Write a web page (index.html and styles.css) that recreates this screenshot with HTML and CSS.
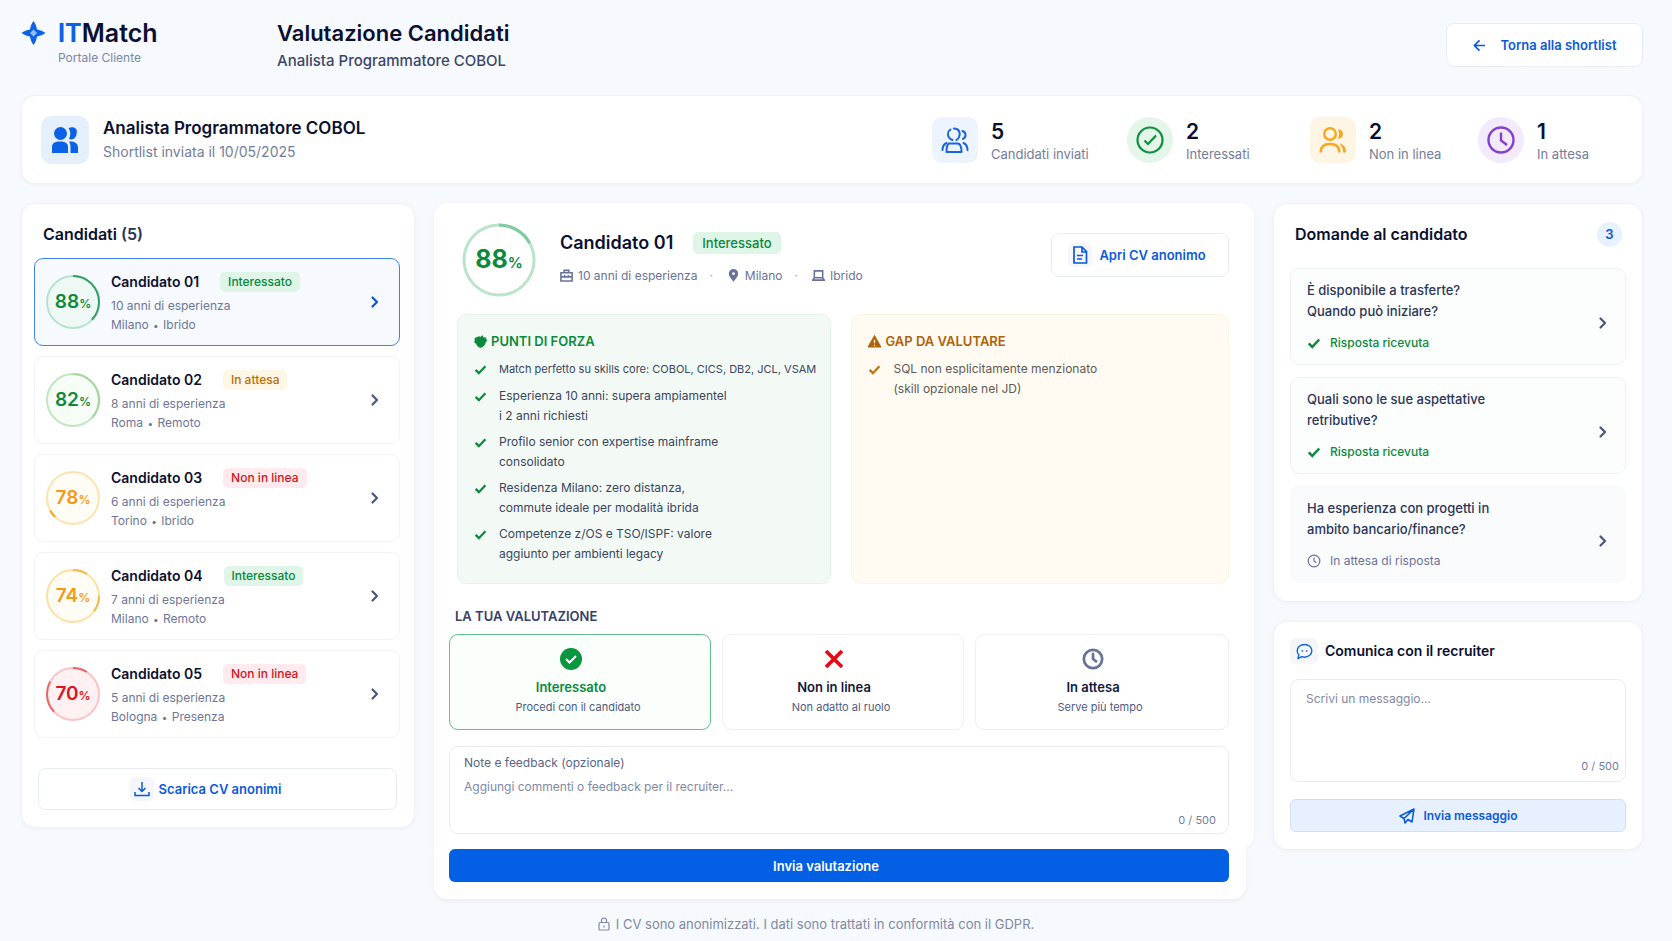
FILE: index.html
```html
<!DOCTYPE html>
<html lang="it">
<head>
  <meta charset="utf-8">
  <meta name="viewport" content="width=device-width, initial-scale=1">
  <title>ITMatch - Valutazione Candidati</title>
  <link rel="stylesheet" href="styles.css">
</head>
<body>

  <!-- shared icons -->
  <svg class="sprite" aria-hidden="true">
    <symbol id="i-chevron" viewBox="0 0 16 16"><path d="M5.5 3.5L10 8l-4.500 4.500" fill="none" stroke="currentColor" stroke-width="2.2" stroke-linecap="round" stroke-linejoin="round"/></symbol>
    <symbol id="i-check" viewBox="0 0 16 16"><path d="M2 8.5l4 4L14 4" fill="none" stroke="currentColor" stroke-width="2.8"/></symbol>
    <symbol id="i-clock" viewBox="0 0 24 24"><g fill="none" stroke="currentColor" stroke-linecap="round" stroke-linejoin="round"><circle cx="12" cy="12" r="10"/><path d="M12 6.5V12l3.5 2.5"/></g></symbol>
  </svg>

  <header class="topbar">
    <div class="brand">
      <svg class="brand-mark" viewBox="0 0 24 24"><path d="M12 0c2 2.500 3 5.500 3.500 8.500C18.500 9 21.500 10 24 12c-2.500 2-5.500 3-8.500 3.500C15 18.500 14 21.500 12 24c-2-2.500-3-5.500-3.500-8.500C5.500 15 2.500 14 0 12c2.500-2 5.500-3 8.500-3.500C9 5.500 10 2.500 12 0z" fill="#0b62e6"/><path d="M12 8.500l3.500 3.500-3.500 3.500L8.500 12z" fill="#8fbcfb"/></svg>
      <div>
        <div class="brand-name"><span>IT</span>Match</div>
        <div class="brand-sub">Portale Cliente</div>
      </div>
    </div>
    <div class="page-title">
      <h1>Valutazione Candidati</h1>
      <p>Analista Programmatore COBOL</p>
    </div>
    <a href="#" class="btn btn-back">
      <svg viewBox="0 0 16 16"><path d="M14 8H3M8 2.500L2.500 8 8 13.500" fill="none" stroke="currentColor" stroke-width="1.800"/></svg>
      Torna alla shortlist
    </a>
  </header>

  <section class="card summary">
    <div class="tile tile-solid">
      <svg viewBox="0 0 28 28" fill="#0b62e6"><circle cx="9.500" cy="7.500" r="6.500"/><path d="M17.500 2c6-2.500 9.500 1 8 5.500 0 4-3.500 7-7.500 5.500 1.800-4 1.800-7.500-.5-11z"/><path d="M1 27v-6c0-4 3-5.500 8-5.500s8 1.500 8 5.500v6zM18 15.500c6-.5 9 2 9 6V27h-7.500v-5c0-3-.5-5-1.500-6.500z"/></svg>
    </div>
    <div class="summary-text">
      <h2>Analista Programmatore COBOL</h2>
      <p>Shortlist inviata il 10/05/2025</p>
    </div>
    <div class="stats">
      <div class="stat">
        <div class="tile tile-blue">
          <svg viewBox="0 0 28 28" fill="none" stroke="currentColor" stroke-width="2" stroke-linecap="round" stroke-linejoin="round"><path d="M9.500 3.500C6.500 5.500 6.500 9 8 11.500c1 1.500 2 2 3.500 2.500M13 2.500c5 0 7 4.500 5 8.500-.5 1.500-1.500 2.500-2.500 3M21.500 5c4 1.500 4 6 .5 8"/><path d="M8 17.500h8.500c3 0 4 2.500 4 8.500h-15c0-5.500.5-7.500 2.500-8.500z"/><path d="M5.500 17C3 18 1.500 20.500 1.500 24M22.500 17c2.500 1 4 3.500 4 7"/></svg>
        </div>
        <div><strong>5</strong><span>Candidati inviati</span></div>
      </div>
      <div class="stat">
        <div class="tile tile-green">
          <svg viewBox="0 0 28 28" fill="none" stroke="currentColor" stroke-width="2.200"><circle cx="14" cy="14" r="12.500"/><path d="M8.500 14.500l3.500 3.500 8-8.500"/></svg>
        </div>
        <div><strong>2</strong><span>Interessati</span></div>
      </div>
      <div class="stat">
        <div class="tile tile-orange">
          <svg viewBox="0 0 28 28" fill="none" stroke="currentColor" stroke-width="2.400"><circle cx="11" cy="8" r="5.800"/><path d="M1.500 26.500c0-6 3.500-8.500 9.500-8.500s9.500 2.500 9.500 8.500"/><path d="M19 3.500c2.500-.5 5 1.500 5 4.500s-2.500 5-5 4.500c1.500-3 1.500-6 0-9zM20.500 17.500c4 .5 6.500 4 6.500 9h-3c0-4-1-6.500-3.500-9z" fill="currentColor" stroke="none"/></svg>
        </div>
        <div><strong>2</strong><span>Non in linea</span></div>
      </div>
      <div class="stat">
        <div class="tile tile-purple">
          <svg viewBox="0 0 28 28" fill="none" stroke="currentColor" stroke-width="2.400"><circle cx="14" cy="14" r="12.500"/><path d="M14 6.500v8l6 4.500"/></svg>
        </div>
        <div><strong>1</strong><span>In attesa</span></div>
      </div>
    </div>
  </section>

  <main class="columns">

    <aside class="card candidates">
      <h2>Candidati <span>(5)</span></h2>
      <ul class="candidate-list">
        <li>
          <a href="#" class="candidate active">
            <div class="ring ring-green">
              <svg viewBox="0 0 54 54"><circle class="track" cx="27" cy="27" r="26"/><circle class="arc" cx="27" cy="27" r="26" pathLength="100" stroke-dasharray="37 100"/></svg>
              <b>88<small>%</small></b>
            </div>
            <div class="candidate-info">
              <h3>Candidato 01 <span class="badge badge-green">Interessato</span></h3>
              <p>10 anni di esperienza</p>
              <p>Milano <i>•</i> Ibrido</p>
            </div>
            <svg class="chevron"><use href="#i-chevron"/></svg>
          </a>
        </li>
        <li>
          <a href="#" class="candidate">
            <div class="ring ring-lime">
              <svg viewBox="0 0 54 54"><circle class="track" cx="27" cy="27" r="26"/><circle class="arc" cx="27" cy="27" r="26" pathLength="100" stroke-dasharray="37 100"/></svg>
              <b>82<small>%</small></b>
            </div>
            <div class="candidate-info">
              <h3>Candidato 02 <span class="badge badge-yellow">In attesa</span></h3>
              <p>8 anni di esperienza</p>
              <p>Roma <i>•</i> Remoto</p>
            </div>
            <svg class="chevron"><use href="#i-chevron"/></svg>
          </a>
        </li>
        <li>
          <a href="#" class="candidate">
            <div class="ring ring-orange">
              <svg viewBox="0 0 54 54"><circle class="track" cx="27" cy="27" r="26"/><circle class="arc" cx="27" cy="27" r="26" pathLength="100" stroke-dasharray="0 62 5 100"/></svg>
              <b>78<small>%</small></b>
            </div>
            <div class="candidate-info">
              <h3>Candidato 03 <span class="badge badge-red">Non in linea</span></h3>
              <p>6 anni di esperienza</p>
              <p>Torino <i>•</i> Ibrido</p>
            </div>
            <svg class="chevron"><use href="#i-chevron"/></svg>
          </a>
        </li>
        <li>
          <a href="#" class="candidate">
            <div class="ring ring-amber">
              <svg viewBox="0 0 54 54"><circle class="track" cx="27" cy="27" r="26"/><circle class="arc" cx="27" cy="27" r="26" pathLength="100" stroke-dasharray="9 16 10 100"/></svg>
              <b>74<small>%</small></b>
            </div>
            <div class="candidate-info">
              <h3>Candidato 04 <span class="badge badge-green">Interessato</span></h3>
              <p>7 anni di esperienza</p>
              <p>Milano <i>•</i> Remoto</p>
            </div>
            <svg class="chevron"><use href="#i-chevron"/></svg>
          </a>
        </li>
        <li>
          <a href="#" class="candidate">
            <div class="ring ring-red">
              <svg viewBox="0 0 54 54"><circle class="track" cx="27" cy="27" r="26"/><circle class="arc" cx="27" cy="27" r="26" pathLength="100" stroke-dasharray="9 54 20 100"/></svg>
              <b>70<small>%</small></b>
            </div>
            <div class="candidate-info">
              <h3>Candidato 05 <span class="badge badge-red">Non in linea</span></h3>
              <p>5 anni di esperienza</p>
              <p>Bologna <i>•</i> Presenza</p>
            </div>
            <svg class="chevron"><use href="#i-chevron"/></svg>
          </a>
        </li>
      </ul>
      <button type="button" class="btn btn-download">
        <span class="btn-icon"><svg viewBox="0 0 16 16" fill="none" stroke="currentColor" stroke-width="1.500"><path d="M8 1v9M4.500 7L8 10.500 11.500 7M1 11v3.500h14V11"/></svg></span>
        Scarica CV anonimi
      </button>
    </aside>

    <section class="detail">
      <div class="detail-main">
        <div class="detail-head">
          <div class="ring ring-big">
            <svg viewBox="0 0 74 74"><circle class="track" cx="37" cy="37" r="35"/><circle class="arc" cx="37" cy="37" r="35" pathLength="100" stroke-dasharray="17 100"/></svg>
            <b>88<small>%</small></b>
          </div>
          <div class="detail-info">
            <h2>Candidato 01 <span class="badge badge-green">Interessato</span></h2>
            <ul class="meta">
              <li><svg viewBox="0 0 14 14" fill="none" stroke="currentColor" stroke-width="1.700"><path d="M1 4h12v9H1zM4.500 4V1.500h5V4M1 8.500h12M5 6.500v3M9 6.500v3"/></svg>10 anni di esperienza</li>
              <li><svg viewBox="0 0 14 14"><path d="M7 0a5 5 0 0 0-5 5c0 3.500 3.500 6 5 9 1.500-3 5-5.500 5-9a5 5 0 0 0-5-5z" fill="currentColor"/><circle cx="7" cy="5" r="1.500" fill="#fff"/></svg>Milano</li>
              <li><svg viewBox="0 0 14 14" fill="none" stroke="currentColor" stroke-width="1.700"><path d="M2.500 2h9v7.500h-9zM0 12h14M2.500 9.500L1 12M11.500 9.500L13 12"/></svg>Ibrido</li>
            </ul>
          </div>
          <a href="#" class="btn btn-cv">
            <span class="btn-icon"><svg viewBox="0 0 16 18" fill="none" stroke="currentColor" stroke-width="1.700"><path d="M2 1h8l4.500 4.500V17H2zM10 1v5h4.500M5 9.500h6M5 13h5"/></svg></span>
            Apri CV anonimo
          </a>
        </div>

        <div class="boxes">
          <div class="box box-green">
            <h3><svg viewBox="0 0 14 14" fill="currentColor"><path d="M7 14C3.500 12.500 2.500 11 2.500 9.500.5 9 0 7 .8 5.500 0 3.500 1.500 2 3.500 2.500 4 1 6 .8 7 2.500c.5-1.500 2-2.500 3-1.500L9.500 3c1.500-1 3.500-.5 3.500 1 1.500 1 1 3-.5 4 0 3-2.500 4.500-5.500 6z"/></svg>PUNTI DI FORZA</h3>
            <ul>
              <li class="compact"><svg><use href="#i-check"/></svg><span>Match perfetto su skills core: COBOL, CICS, DB2, JCL, VSAM</span></li>
              <li><svg><use href="#i-check"/></svg><span>Esperienza 10 anni: supera ampiamentel<br>i 2 anni richiesti</span></li>
              <li><svg><use href="#i-check"/></svg><span>Profilo senior con expertise mainframe<br>consolidato</span></li>
              <li><svg><use href="#i-check"/></svg><span>Residenza Milano: zero distanza,<br>commute ideale per modalità ibrida</span></li>
              <li><svg><use href="#i-check"/></svg><span>Competenze z/OS e TSO/ISPF: valore<br>aggiunto per ambienti legacy</span></li>
            </ul>
          </div>
          <div class="box box-yellow">
            <h3><svg viewBox="0 0 14 14"><path d="M7 .5L14 13H0z" fill="currentColor" stroke="currentColor" stroke-linejoin="round"/><path d="M7 5v4M7 10.500V12" stroke="#fff3d6" stroke-width="1.400"/></svg>GAP DA VALUTARE</h3>
            <ul>
              <li><svg><use href="#i-check"/></svg><span>SQL non esplicitamente menzionato<br>(skill opzionale nel JD)</span></li>
            </ul>
          </div>
        </div>

        <h3 class="section-label">LA TUA VALUTAZIONE</h3>
        <div class="options">
          <button type="button" class="option selected">
            <span class="option-title">
              <svg viewBox="0 0 22 22"><circle cx="11" cy="11" r="11" fill="#08963f"/><path d="M6 11l3.500 3.500 6.500-6.500" fill="none" stroke="#fff" stroke-width="2"/></svg>
              Interessato
            </span>
            <small>Procedi con il candidato</small>
          </button>
          <button type="button" class="option">
            <span class="option-title">
              <svg viewBox="0 0 22 22"><path d="M3 3l16 16M19 3L3 19" stroke="#e60914" stroke-width="3.800"/></svg>
              Non in linea
            </span>
            <small>Non adatto al ruolo</small>
          </button>
          <button type="button" class="option">
            <span class="option-title">
              <svg class="icon-wait"><use href="#i-clock"/></svg>
              In attesa
            </span>
            <small>Serve più tempo</small>
          </button>
        </div>

        <div class="notes">
          <label for="notes">Note e feedback (opzionale)</label>
          <textarea id="notes" maxlength="500" placeholder="Aggiungi commenti o feedback per il recruiter..."></textarea>
          <span class="counter">0 / 500</span>
        </div>
      </div>
      <div class="detail-foot">
        <button type="submit" class="btn-primary">Invia valutazione</button>
      </div>
    </section>

    <div class="side">
      <section class="card questions">
        <div class="questions-head">
          <h2>Domande al candidato</h2>
          <span class="count">3</span>
        </div>
        <a href="#" class="question">
          <div>
            <p>È disponibile a trasferte?<br>Quando può iniziare?</p>
            <span class="status status-ok"><svg><use href="#i-check"/></svg>Risposta ricevuta</span>
          </div>
          <svg class="chevron"><use href="#i-chevron"/></svg>
        </a>
        <a href="#" class="question">
          <div>
            <p>Quali sono le sue aspettative<br>retributive?</p>
            <span class="status status-ok"><svg><use href="#i-check"/></svg>Risposta ricevuta</span>
          </div>
          <svg class="chevron"><use href="#i-chevron"/></svg>
        </a>
        <a href="#" class="question pending">
          <div>
            <p>Ha esperienza con progetti in<br>ambito bancario/finance?</p>
            <span class="status"><svg class="icon-wait"><use href="#i-clock"/></svg>In attesa di risposta</span>
          </div>
          <svg class="chevron"><use href="#i-chevron"/></svg>
        </a>
      </section>

      <section class="card recruiter">
        <h2>
          <span class="btn-icon"><svg viewBox="0 0 18 18" fill="none" stroke="currentColor" stroke-width="1.500" stroke-linejoin="round"><path d="M2 16.500l1-3.700C.5 10 .8 6 3.500 3.500c3-2.500 8-2.500 11 0s3 7 0 9.500c-2.500 2-6 2.300-8.500 1.500z"/><path d="M6 8.500h1.500M10.500 8.500H12"/></svg></span>
          <label for="message">Comunica con il recruiter</label>
        </h2>
        <div class="message">
          <textarea id="message" maxlength="500" placeholder="Scrivi un messaggio..."></textarea>
          <span class="counter">0 / 500</span>
        </div>
        <button type="button" class="btn btn-send">
          <svg viewBox="0 0 16 16" fill="none" stroke="currentColor" stroke-width="1.600" stroke-linejoin="round"><path d="M15 1L1 8l4 2.500L15 1l-2 13-4-2.500L6 15l-1-4.500"/></svg>
          Invia messaggio
        </button>
      </section>
    </div>
  </main>

  <footer class="privacy">
    <svg viewBox="0 0 12 14" fill="none" stroke="currentColor" stroke-width="1.200"><rect x="1" y="5.500" width="10" height="7.500" rx="1"/><path d="M3.500 5.500V3.500a2.500 2.500 0 0 1 5 0v2M6 8.500v2"/></svg>
    I CV sono anonimizzati. I dati sono trattati in conformità con il GDPR.
  </footer>

</body>
</html>
```
FILE: styles.css
```css
* {
  box-sizing: border-box;
}

body {
  margin: 0;
  padding: 0 29px 0 21px;
  background: #f6f9fd;
  color: #0b1030;
  font-family: Inter, "Liberation Sans", sans-serif;
  font-size: 13px;
  line-height: 20px;
}

h1, h2, h3, p, ul {
  margin: 0;
  padding: 0;
}

ul {
  list-style: none;
}

a {
  color: inherit;
  text-decoration: none;
}

button, textarea {
  font-family: inherit;
  font-size: 13px;
}

button {
  cursor: pointer;
}

svg {
  display: block;
  flex: none;
}

.sprite {
  display: none;
}

.card {
  background: #fff;
  border: 1px solid #eff3f8;
  border-radius: 14px;
  box-shadow: 0 1px 4px rgba(30, 60, 110, 0.04);
}

/* Header */
.topbar {
  display: flex;
  align-items: flex-start;
  height: 95px;
  padding-top: 17px;
}

.brand {
  display: flex;
  gap: 12px;
  width: 256px;
}

.brand-mark {
  width: 25px;
  height: 24px;
  margin-top: 4px;
}

.brand-name {
  font-size: 25px;
  font-weight: 600;
  line-height: 32px;
}

.brand-name span {
  color: #0b62e6;
  font-weight: 700;
}

.brand-sub {
  color: #7d86a8;
  font-size: 12px;
  line-height: 18px;
}

.page-title h1 {
  font-size: 22px;
  font-weight: 600;
  line-height: 32px;
}

.page-title p {
  color: #3c4668;
  font-size: 15px;
  font-weight: 500;
  line-height: 24px;
}

.btn {
  display: flex;
  align-items: center;
  justify-content: center;
  background: #fff;
  border: 1px solid #e8edf4;
  border-radius: 8px;
  color: #0b5ad9;
  font-weight: 600;
}

.btn-back {
  gap: 13px;
  width: 197px;
  height: 44px;
  margin: 6px 0 0 auto;
}

.btn-back svg {
  width: 15px;
  height: 15px;
}

.btn-icon {
  display: flex;
  align-items: center;
  justify-content: center;
  width: 24px;
  height: 24px;
  border-radius: 6px;
  background: #f4f6fa;
}

/* Summary */
.summary {
  display: flex;
  align-items: center;
  height: 89px;
  padding: 0 4px 0 19px;
}

.tile {
  display: flex;
  align-items: center;
  justify-content: center;
  flex: none;
  width: 46px;
  height: 46px;
  border-radius: 10px;
}

.tile svg {
  width: 28px;
  height: 28px;
}

.tile-solid {
  width: 48px;
  height: 48px;
  background: #e6effc;
}

.tile-blue { background: #edf4fe; color: #1763e0; }
.tile-green { background: #e4f5ea; color: #0c8f3e; border-radius: 50%; }
.tile-orange { background: #fef5e4; color: #f9a61a; }
.tile-purple { background: #f3eafc; color: #8140cf; border-radius: 50%; }

.summary-text {
  margin-left: 14px;
}

.summary-text h2 {
  font-size: 17px;
  font-weight: 600;
  line-height: 24px;
}

.summary-text p {
  color: #747d9c;
  font-size: 14px;
  line-height: 24px;
}

.stats {
  display: grid;
  grid-template-columns: 195px 183px 168px 160px;
  margin-left: auto;
}

.stat {
  display: flex;
  align-items: center;
  gap: 13px;
}

.stat strong {
  display: block;
  padding-top: 3px;
  font-size: 21px;
  font-weight: 600;
  line-height: 25px;
}

.stat span {
  display: block;
  color: #747d9c;
  font-size: 13px;
}

/* Columns */
.columns {
  display: grid;
  grid-template-columns: 394fr 820fr 370fr;
  align-items: start;
  gap: 19px;
  margin-top: 19px;
}

/* Candidates */
.candidates {
  padding: 18px 14px 17px 12px;
}

.candidates h2 {
  padding-left: 9px;
  font-size: 16px;
  font-weight: 600;
  line-height: 24px;
}

.candidates h2 span {
  color: #27335a;
}

.candidate-list {
  display: grid;
  gap: 10px;
  margin-top: 12px;
}

.candidate {
  display: flex;
  align-items: center;
  height: 88px;
  padding: 0 16px 0 11px;
  border: 1px solid #f0f4f8;
  border-radius: 9px;
}

.candidate.active {
  background: #f6fafe;
  border-color: #3f83ea;
}

.ring {
  position: relative;
  display: flex;
  align-items: center;
  justify-content: center;
  flex: none;
  width: 54px;
  height: 54px;
}

.ring svg {
  position: absolute;
  inset: 0;
  transform: rotate(-90deg);
}

.ring circle {
  fill: none;
  stroke-width: 2;
}

.ring b {
  position: relative;
  padding-top: 2px;
  font-size: 19px;
  font-weight: 600;
}

.ring small {
  font-size: 12px;
  font-weight: 600;
}

.ring-green { color: #0b8a3c; }
.ring-green .track { stroke: #b5e2ca; fill: #eef8f5; }
.ring-green .arc { stroke: #2da261; }
.ring-lime { color: #0b8a3c; }
.ring-lime .track { stroke: #bfe6bd; fill: #f6fcf6; }
.ring-lime .arc { stroke: #a3d79c; }
.ring-orange { color: #f59a14; }
.ring-orange .track { stroke: #fde3b0; fill: #fffbf5; }
.ring-orange .arc { stroke: #f5a428; }
.ring-amber { color: #f59a14; }
.ring-amber .track { stroke: #fddf9f; fill: #fffcf5; }
.ring-amber .arc { stroke: #f8b94b; }
.ring-red { color: #e0141c; }
.ring-red .track { stroke: #fbc3c6; fill: #fff1f1; }
.ring-red .arc { stroke: #e8686a; }

.candidate-info {
  flex: 1;
  margin-left: 11px;
}

.candidate-info h3 {
  display: flex;
  align-items: center;
  gap: 21px;
  font-size: 14px;
  font-weight: 600;
  line-height: 24px;
  margin-bottom: 2px;
}

.candidate-info p {
  color: #6d7698;
  font-size: 12px;
  line-height: 19px;
}

.candidate-info i {
  font-size: 10px;
  font-style: normal;
  margin: 0 1px;
}

.badge {
  padding: 0 8px;
  border-radius: 5px;
  font-size: 12px;
  font-weight: 500;
  line-height: 20px;
}

.badge-green { background: #dff5e8; color: #08893a; }
.badge-yellow { background: #fff7e6; color: #bd6c07; }
.badge-red { background: #ffebed; color: #d3131c; }

.chevron {
  width: 16px;
  height: 16px;
  color: #4a557d;
}

.active .chevron {
  color: #0b55d4;
}

.btn-download {
  gap: 5px;
  width: calc(100% - 7px);
  height: 42px;
  margin: 30px 3px 0 4px;
  padding-right: 30px;
}

.btn-download svg {
  width: 16px;
  height: 16px;
}

/* Detail */
.detail-main,
.detail-foot {
  background: #fff;
  box-shadow: 0 1px 4px rgba(30, 60, 110, 0.04);
}

.detail-main {
  padding: 20px 25px 15px 15px;
  border-radius: 14px 14px 14px 0;
}

.detail-foot {
  position: relative;
  margin-right: 8px;
  padding: 0 17px 17px 15px;
  border-radius: 0 0 14px 14px;
  box-shadow: 0 3px 4px rgba(30, 60, 110, 0.04);
}

.detail-head {
  display: flex;
  align-items: center;
  padding-left: 13px;
}

.ring-big {
  width: 74px;
  height: 74px;
  color: #0b8a3c;
}

.ring-big circle { stroke-width: 3; }
.ring-big .track { stroke: #b9e4cb; }
.ring-big .arc { stroke: #80cba0; }
.ring-big b { font-size: 25px; font-weight: 700; }
.ring-big small { font-size: 15px; }

.detail-info {
  margin: 0 0 4px 24px;
}

.detail-info h2 {
  display: flex;
  align-items: center;
  gap: 20px;
  font-size: 18px;
  font-weight: 600;
  line-height: 24px;
}

.detail-info .badge {
  padding: 1px 9px;
  font-size: 13px;
}

.meta {
  display: flex;
  margin-top: 11px;
  color: #69739a;
  font-size: 12px;
}

.meta li {
  display: flex;
  align-items: center;
  gap: 5px;
}

.meta li + li::before {
  content: "·";
  margin: 0 9px 0 12px;
  color: #9aa3bd;
}

.meta svg {
  width: 13px;
  height: 13px;
}

.btn-cv {
  gap: 7px;
  width: 178px;
  height: 44px;
  margin: 0 0 10px auto;
  padding-right: 6px;
}

.btn-cv svg {
  width: 16px;
  height: 18px;
}

.boxes {
  display: grid;
  grid-template-columns: 374fr 377fr;
  gap: 20px;
  margin: 17px 0 0 8px;
}

.box {
  min-height: 270px;
  padding: 16px 10px 13px 16px;
  border: 1px solid #e4f3ea;
  border-radius: 10px;
  background: #f3faf6;
}

.box-yellow {
  border-color: #fdf5dc;
  background: #fffaf2;
}

.box h3 {
  display: flex;
  align-items: center;
  gap: 4px;
  color: #0b8a3c;
  font-size: 13px;
  font-weight: 600;
  margin-bottom: 8px;
}

.box h3 svg {
  width: 13px;
  height: 13px;
}

.box li {
  display: flex;
  gap: 12px;
  margin-bottom: 6px;
  color: #3a4560;
  font-size: 12px;
}

.box .compact {
  font-size: 11px;
  line-height: 21px;
  white-space: nowrap;
}

.box li svg {
  width: 13px;
  height: 13px;
  margin-top: 4px;
  color: #0b8a3c;
}

.box-yellow h3 { color: #ad6309; }
.box-yellow li { color: #5e5a56; }
.box-yellow li svg { color: #c27414; }

.section-label {
  margin: 22px 0 8px 6px;
  color: #35406a;
  font-size: 13px;
  font-weight: 600;
}

.options {
  display: grid;
  grid-template-columns: 262fr 242fr 254fr;
  gap: 11px;
}

.option {
  display: flex;
  flex-direction: column;
  align-items: center;
  padding: 13px 0 12px;
  border: 1px solid #edf1f5;
  border-radius: 9px;
  background: #fff;
  color: #111a3c;
}

.option.selected {
  background: #fafffc;
  border-color: #62c08c;
}

.option svg {
  width: 22px;
  height: 22px;
}

.icon-wait {
  color: #69739a;
  stroke-width: 3px;
}

.status .icon-wait {
  stroke-width: 2px;
}

.option-title {
  display: flex;
  flex-direction: column;
  align-items: center;
  gap: 7px;
  padding-right: 18px;
  font-weight: 600;
  line-height: 20px;
}

.selected .option-title {
  color: #0b8a3c;
}

.option small {
  padding-right: 4px;
  color: #505a80;
  font-size: 11px;
  line-height: 20px;
}

.notes,
.message {
  display: flex;
  flex-direction: column;
  border: 1px solid #e9edf3;
  border-radius: 9px;
}

.notes {
  margin-top: 16px;
  padding: 6px 0 3px 14px;
}

.notes label {
  color: #5b6587;
  font-size: 12px;
}

textarea {
  padding: 0;
  border: 0;
  outline: 0;
  background: transparent;
  color: #0b1030;
  font-size: 12px;
  line-height: 20px;
  resize: none;
}

textarea::placeholder {
  color: #7f88a6;
  opacity: 1;
}

.notes textarea {
  height: 37px;
  padding-top: 4px;
}

.counter {
  align-self: flex-end;
  color: #737c9b;
  font-size: 11px;
}

.notes .counter {
  margin-right: 12px;
}

.btn-primary {
  display: block;
  width: 100%;
  height: 33px;
  padding-right: 32px;
  border: 0;
  border-radius: 6px;
  background: #035fe4;
  color: #fff;
  font-weight: 600;
}

/* Right column */
.side {
  display: grid;
  gap: 19px;
}

.questions {
  display: grid;
  gap: 12px;
  padding: 17px 16px 18px;
}

.questions-head {
  display: flex;
  align-items: center;
  justify-content: space-between;
  padding: 0 4px 0 5px;
  margin-bottom: 9px;
}

.questions h2 {
  font-size: 16px;
  font-weight: 600;
  line-height: 26px;
}

.count {
  width: 25px;
  height: 25px;
  border-radius: 50%;
  background: #e8f1fe;
  color: #0b55d4;
  font-weight: 600;
  line-height: 25px;
  text-align: center;
}

.question {
  display: flex;
  align-items: center;
  justify-content: space-between;
  height: 97px;
  padding: 0 14px 0 16px;
  border: 1px solid #eff2f5;
  border-radius: 9px;
  background: #fcfdfd;
}

.question.pending {
  border-color: #f7f9fc;
  background: #f9fbfd;
}

.question .chevron {
  margin-top: 12px;
}

.question p {
  color: #2b3658;
  font-weight: 500;
  line-height: 21px;
}

.status {
  display: flex;
  align-items: center;
  gap: 9px;
  margin-top: 11px;
  color: #69739a;
  font-size: 12px;
}

.status svg {
  width: 14px;
  height: 14px;
}

.status-ok {
  color: #0b8a3c;
  font-weight: 500;
}

.recruiter {
  padding: 16px 16px 17px;
}

.recruiter h2 {
  display: flex;
  align-items: center;
  gap: 7px;
  font-size: 14px;
  font-weight: 600;
  line-height: 26px;
}

.recruiter .btn-icon {
  width: 28px;
  height: 26px;
  color: #1763e0;
}

.recruiter .btn-icon svg {
  width: 17px;
  height: 17px;
}

.message {
  margin-top: 15px;
  padding: 9px 0 5px 15px;
}

.message textarea {
  height: 67px;
}

.message .counter {
  margin-right: 6px;
}

.btn-send {
  gap: 9px;
  width: 100%;
  height: 33px;
  margin-top: 17px;
  border-color: #cfdff7;
  border-radius: 6px;
  background: #e7f0fe;
  font-size: 12px;
}

.btn-send svg {
  width: 16px;
  height: 16px;
}

.privacy {
  display: flex;
  align-items: center;
  justify-content: center;
  gap: 6px;
  margin-top: 15px;
  padding-right: 32px;
  color: #8089a5;
  font-size: 13px;
}

.privacy svg {
  width: 12px;
  height: 14px;
}
```
